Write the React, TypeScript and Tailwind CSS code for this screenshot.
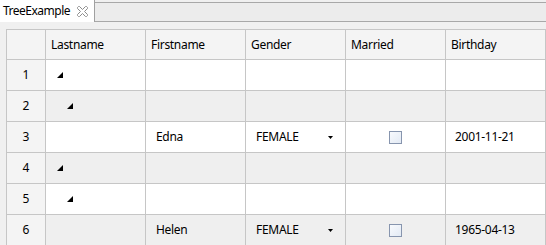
import React from "react";

type Row = {
  n: number;
  level?: number;
  first?: string;
  gender?: string;
  bday?: string;
};

const rows: Row[] = [
  { n: 1, level: 1 },
  { n: 2, level: 2 },
  { n: 3, first: "Edna", gender: "FEMALE", bday: "2001-11-21" },
  { n: 4, level: 1 },
  { n: 5, level: 2 },
  { n: 6, first: "Helen", gender: "FEMALE", bday: "1965-04-13" },
];

const headers = ["Lastname", "Firstname", "Gender", "Married", "Birthday"];

function Tri() {
  return (
    <svg width="6" height="6" viewBox="0 0 6 6" className="block">
      <polygon points="6,0 6,6 0,6" fill="#000" />
    </svg>
  );
}

function CloseIcon() {
  return (
    <svg width="11" height="11" viewBox="0 0 11 11" className="block">
      <polygon
        points="0.5,1.5 1.5,0.5 2.5,0.5 5.5,3.5 8.5,0.5 9.5,0.5 10.5,1.5 10.5,2.5 7.5,5.5 10.5,8.5 10.5,9.5 9.5,10.5 8.5,10.5 5.5,7.5 2.5,10.5 1.5,10.5 0.5,9.5 0.5,8.5 3.5,5.5 0.5,2.5"
        fill="#fff"
        stroke="#8c8c8c"
        strokeWidth="1"
      />
    </svg>
  );
}

export default function App() {
  return (
    <div
      className="w-[546px] h-[245px] overflow-hidden bg-[#f0f0f0] text-[12px] text-black"
      style={{ fontFamily: '"Noto Sans", "Open Sans", sans-serif' }}
    >
      <div className="flex h-[22px]">
        <div className="w-[95px] bg-white border-r border-[#a0a0a0] flex items-center pl-[3px] gap-[7px]">
          <span className="leading-none tracking-[-0.5px]">TreeExample</span>
          <CloseIcon />
        </div>
        <div className="flex-1 mt-[2px] h-[20px] bg-[#ececec] border-t border-b border-[#a8a8a8]" />
      </div>
      <div className="pl-[6px] pt-[7px]">
        <div className="grid grid-cols-[39px_repeat(5,100px)] border-l border-t border-[#c6c6c6] w-[540px]">
          <div className="h-[30px] bg-[#f4f4f4] border-r border-b border-[#c6c6c6]" />
          {headers.map((h) => (
            <div
              key={h}
              className="h-[30px] bg-[#f4f4f4] border-r border-b border-[#c6c6c6] flex items-center pl-[5px] tracking-[-0.3px]"
            >
              {h}
            </div>
          ))}
          {rows.map((r) => {
            const bg = r.n % 2 === 0 ? "bg-[#efefef]" : "bg-white";
            const cell = `h-[31px] border-r border-b border-[#c6c6c6] flex items-center ${bg}`;
            return (
              <React.Fragment key={r.n}>
                <div className="h-[31px] bg-[#f4f4f4] border-r border-b border-[#c6c6c6] flex items-center justify-center">
                  {r.n}
                </div>
                <div className={cell}>
                  {r.level === 1 && (
                    <div className="pl-[11px]">
                      <Tri />
                    </div>
                  )}
                  {r.level === 2 && (
                    <div className="pl-[21px]">
                      <Tri />
                    </div>
                  )}
                </div>
                <div className={`${cell} pl-[10px] tracking-[-0.3px]`}>{r.first}</div>
                <div className={`${cell} pl-[10px] pr-[12px] justify-between`}>
                  {r.gender && (
                    <>
                      <span className="tracking-[-0.3px]">{r.gender}</span>
                      <svg width="5" height="3" viewBox="0 0 5 3" className="block">
                        <polygon points="0,0 5,0 2.5,3" fill="#000" />
                      </svg>
                    </>
                  )}
                </div>
                <div className={`${cell} justify-center`}>
                  {r.gender && (
                    <div className="w-[13px] h-[13px] border border-[#8795ae] bg-gradient-to-br from-[#f8fafd] to-[#e3eaf4]" />
                  )}
                </div>
                <div className={`${cell} pl-[9px] tracking-[-0.3px]`}>{r.bday}</div>
              </React.Fragment>
            );
          })}
        </div>
      </div>
    </div>
  );
}
